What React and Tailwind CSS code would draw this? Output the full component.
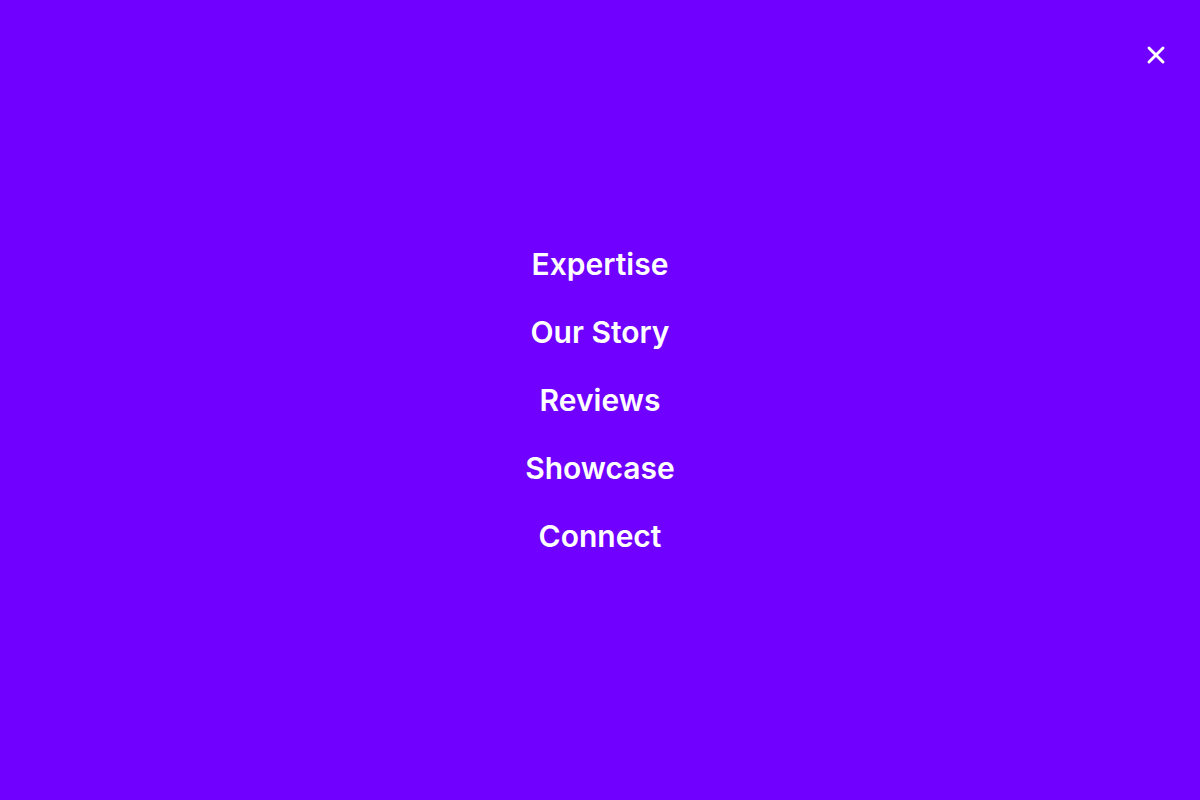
import { X } from 'lucide-react'

const LINKS = ['Expertise', 'Our Story', 'Reviews', 'Showcase', 'Connect']

export default function App() {
  return (
    <div className="relative min-h-screen w-full bg-[#7000ff] flex items-center justify-center" style={{ fontFamily: 'Inter, "Noto Sans", sans-serif' }}>
      <button className="absolute top-[41px] right-[30px] text-white">
        <X size={28} strokeWidth={2.5} />
      </button>
      <nav className="flex flex-col items-center gap-8">
        {LINKS.map(l => (
          <a key={l} href="#" className="text-[30px] leading-9 font-semibold text-white">{l}</a>
        ))}
      </nav>
    </div>
  )
}
